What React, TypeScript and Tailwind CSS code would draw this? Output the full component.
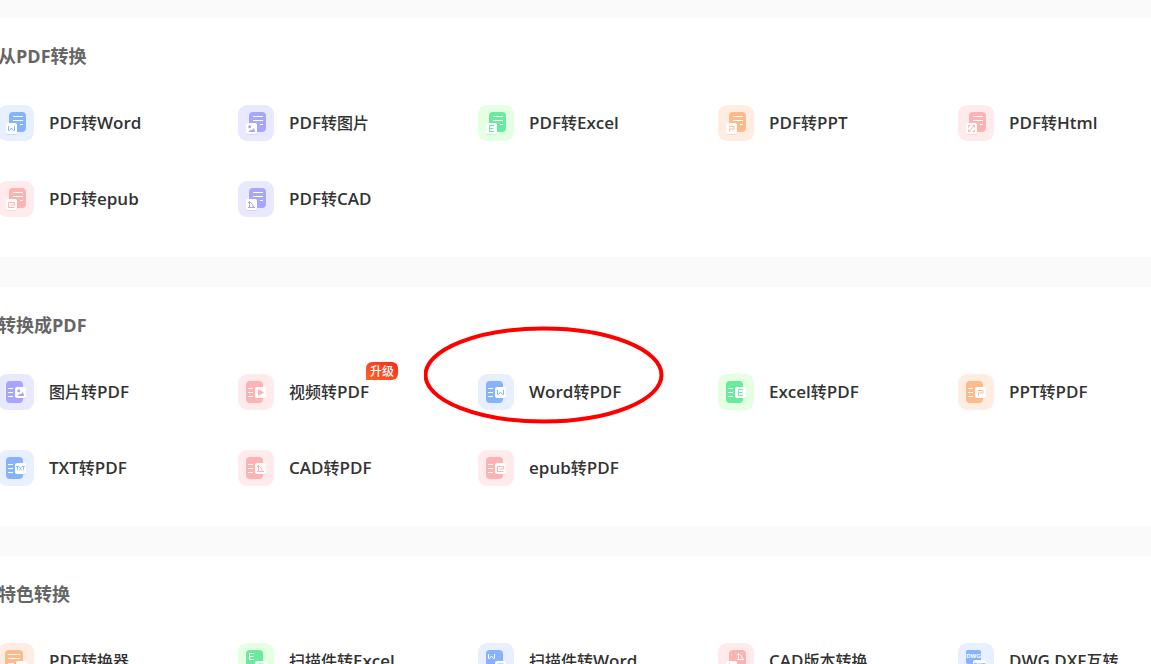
import type { ReactNode } from 'react'

const themes = {
  blue: { soft: '#e8f0ff', main: '#86b2ff' },
  purple: { soft: '#e8e8ff', main: '#a8a5ff' },
  green: { soft: '#e4ffe2', main: '#68eb9e' },
  orange: { soft: '#ffede2', main: '#ffb98a' },
  red: { soft: '#ffebeb', main: '#ffb2b2' },
}

// every glyph is drawn in an 11x11 box
const glyphs: Record<string, ReactNode> = {
  w: <path d="M2.5 3v4.5h1L5.5 5l2 2.5h1V3" />,
  e: <path d="M8 2.5H3.5v6H8M3.5 5.5h4" />,
  p: <path d="M3 3.5h5v2.5H3.5v2.5" />,
  epub: <path d="M8.5 8.5h-6v-5h6v2.5h-4" />,
  cad: <path d="M3.5 2v6.5M2 3.5h2.5Q7.5 4.5 7.5 9M2 8.5h7" />,
  html: <path d="M2.5 4.5v-2h2M6.5 2.5h2v2M2.5 6.5v2h2M8.5 6.5v2h-2M3.5 8l4.5-5" />,
  txt: <path d="M1 3.5h3M2.5 3.5v4M4.2 3.5l2.6 4M6.8 3.5l-2.6 4M7 3.5h3M8.5 3.5v4" strokeWidth="0.8" />,
  image: (
    <g fill="currentColor" stroke="none">
      <circle cx="3.7" cy="3.7" r="1.5" />
      <path d="M2.5 9l2.3-2.5 1 .8L8 5l1.2 4z" />
    </g>
  ),
  play: <path d="M3.5 2.8v5.4L8.5 5.5z" fill="currentColor" />,
  grid: <path d="M2.5 3h6v5h-6zM2.5 5.5h6M5.5 3v5" />,
}

function Glyph({ name, x, y, color }: { name: string; x: number; y: number; color: string }) {
  return (
    <g transform={`translate(${x} ${y})`} stroke={color} color={color} fill="none" strokeWidth="1">
      {glyphs[name]}
    </g>
  )
}

function Chip({ x, y, w = 11, color }: { x: number; y: number; w?: number; color: string }) {
  return (
    <>
      <rect x={x} y={y + 1} width={w} height="11" rx="2" fill={color} opacity="0.35" />
      <rect x={x} y={y} width={w} height="11" rx="2" fill="#fff" />
    </>
  )
}

type Item = { text: string; kind: string; glyph: string; color: keyof typeof themes; tag?: string; marked?: boolean }

function Icon({ kind, glyph, color }: Item) {
  const { soft, main } = themes[color]
  return (
    <svg viewBox="0 0 36 36" className="size-9 shrink-0" aria-hidden="true">
      <rect width="36" height="36" rx="9" fill={soft} />
      {kind === 'from' && (
        <>
          <rect x="11" y="7" width="17" height="20" rx="4" fill={main} />
          <path d="M15 11.5h10M15 15.5h10M22 19.5h3" stroke="#fff" />
          <Chip x={8} y={18} color={main} />
          <Glyph name={glyph} x={8} y={18} color={main} />
        </>
      )}
      {kind === 'to' && (
        <>
          <rect x="8" y="7" width="17" height="22" rx="4" fill={main} />
          <path d="M10 14.5h5M10 18.5h5M10 22.5h5" stroke="#fff" />
          <Chip x={17} y={13} color={main} />
          <Glyph name={glyph} x={17} y={13} color={main} />
        </>
      )}
      {kind === 'list' && (
        <>
          <rect x="7" y="7" width="18" height="22" rx="4" fill={main} />
          <path d="M10 11.5h12M10 15.5h12M10 20.5h6" stroke="#fff" />
          <Chip x={18} y={18} color={main} />
          <Glyph name={glyph} x={18} y={18} color={main} />
        </>
      )}
      {kind === 'scan' && (
        <>
          <rect x="8" y="7" width="17" height="22" rx="4" fill={main} />
          <Glyph name={glyph} x={8} y={8} color="#fff" />
          <Chip x={17} y={18} color={main} />
          <Glyph name="grid" x={17} y={18} color={main} />
        </>
      )}
      {kind === 'version' && (
        <>
          <rect x="11" y="7" width="17" height="22" rx="4" fill={main} />
          <Glyph name={glyph} x={17} y={8} color="#fff" />
          <Chip x={8} y={18} color={main} />
          <Glyph name={glyph} x={8} y={18} color={main} />
        </>
      )}
      {kind === 'dwg' && (
        <>
          <rect x="8" y="7" width="15" height="14" rx="2" fill={main} />
          <Chip x={15} y={17} w={13} color={main} />
          <g fontFamily="Liberation Sans, sans-serif" fontSize="6" fontWeight="700" textAnchor="middle">
            <text x="15.5" y="15" fill="#fff">DWG</text>
            <text x="21.5" y="24" fill={main}>DXF</text>
          </g>
        </>
      )}
    </svg>
  )
}

const sections: { title: string; items: Item[] }[] = [
  {
    title: '从PDF转换',
    items: [
      { text: 'PDF转Word', kind: 'from', glyph: 'w', color: 'blue' },
      { text: 'PDF转图片', kind: 'from', glyph: 'image', color: 'purple' },
      { text: 'PDF转Excel', kind: 'from', glyph: 'e', color: 'green' },
      { text: 'PDF转PPT', kind: 'from', glyph: 'p', color: 'orange' },
      { text: 'PDF转Html', kind: 'from', glyph: 'html', color: 'red' },
      { text: 'PDF转epub', kind: 'from', glyph: 'epub', color: 'red' },
      { text: 'PDF转CAD', kind: 'from', glyph: 'cad', color: 'purple' },
    ],
  },
  {
    title: '转换成PDF',
    items: [
      { text: '图片转PDF', kind: 'to', glyph: 'image', color: 'purple' },
      { text: '视频转PDF', kind: 'to', glyph: 'play', color: 'red', tag: '升级' },
      { text: 'Word转PDF', kind: 'to', glyph: 'w', color: 'blue', marked: true },
      { text: 'Excel转PDF', kind: 'to', glyph: 'e', color: 'green' },
      { text: 'PPT转PDF', kind: 'to', glyph: 'p', color: 'orange' },
      { text: 'TXT转PDF', kind: 'to', glyph: 'txt', color: 'blue' },
      { text: 'CAD转PDF', kind: 'to', glyph: 'cad', color: 'red' },
      { text: 'epub转PDF', kind: 'to', glyph: 'epub', color: 'red' },
    ],
  },
  {
    title: '特色转换',
    items: [
      { text: 'PDF转换器', kind: 'list', glyph: 'p', color: 'orange' },
      { text: '扫描件转Excel', kind: 'scan', glyph: 'e', color: 'green' },
      { text: '扫描件转Word', kind: 'scan', glyph: 'w', color: 'blue' },
      { text: 'CAD版本转换', kind: 'version', glyph: 'cad', color: 'red' },
      { text: 'DWG DXF互转', kind: 'dwg', glyph: '', color: 'blue' },
    ],
  },
]

// latin words are heavier and a touch larger than the chinese around them
function Label({ text }: { text: string }) {
  return text.split(/([A-Za-z ]+)/).map((part, i) =>
    i % 2 ? <span key={i} className="text-[17px] font-semibold">{part}</span> : part
  )
}

function Tool(item: Item) {
  return (
    <a href="#" className="relative flex items-center gap-[15px]">
      <Icon {...item} />
      <span className="relative text-base leading-6 font-medium whitespace-nowrap text-[#333]">
        <Label text={item.text} />
        {item.tag && (
          <span className="absolute -top-[18px] left-full -ml-[3px] h-[18px] w-8 rounded-md rounded-bl-none bg-linear-to-tr from-[#ff6024] to-[#ff2020] text-center text-xs leading-5 text-white">
            {item.tag}
          </span>
        )}
      </span>
      {item.marked && (
        <svg viewBox="0 0 240 98" className="pointer-events-none absolute -top-12 -left-[54px] h-[98px] w-60" aria-hidden="true">
          <ellipse cx="119.5" cy="49" rx="118" ry="46.5" fill="none" stroke="#f00" strokeWidth="4" />
        </svg>
      )}
    </a>
  )
}

export default function App() {
  return (
    <main className="h-screen overflow-hidden bg-[#fafafa] pt-[18px] font-['Open_Sans','Noto_Sans_CJK_SC',sans-serif]">
      <div className="flex flex-col gap-[30px]">
        {sections.map((s) => (
          <section key={s.title} className="bg-white pt-[26px] pb-10">
            <div className="-ml-0.5">
              <h2 className="text-lg leading-6 font-bold text-[#666]">{s.title}</h2>
              <div className="mt-[37px] grid grid-cols-[repeat(5,minmax(240px,1fr))] gap-y-10">
                {s.items.map((item) => (
                  <Tool key={item.text} {...item} />
                ))}
              </div>
            </div>
          </section>
        ))}
      </div>
    </main>
  )
}
